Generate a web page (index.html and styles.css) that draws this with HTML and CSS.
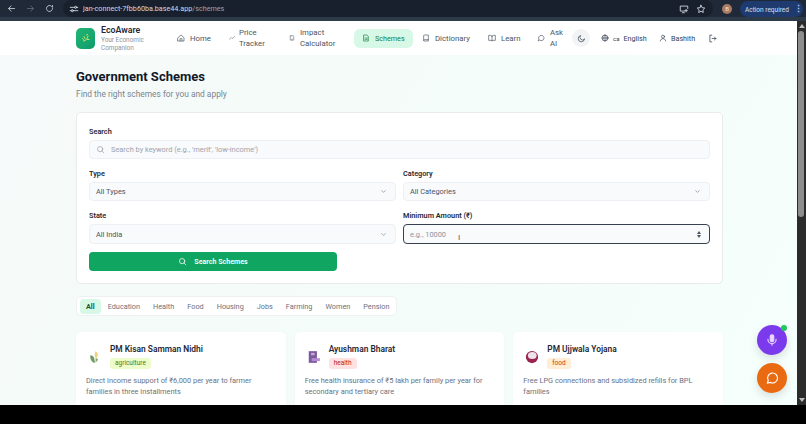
FILE: index.html
```html
<!DOCTYPE html>
<html lang="en">
<head>
    <meta charset="UTF-8">
    <title>Government Schemes - EcoAware</title>
    <link rel="stylesheet" href="styles.css">
</head>
<body>
    <div class="browser-bar">
        <div class="browser-nav">
            <svg class="b-icon" viewBox="0 0 24 24"><path d="M20 12H5M11 5l-7 7 7 7"/></svg>
            <svg class="b-icon dim" viewBox="0 0 24 24"><path d="M4 12h15M13 5l7 7-7 7"/></svg>
            <svg class="b-icon" viewBox="0 0 24 24"><path d="M20 12a8 8 0 1 1-2.500-5.800L20 9V4"/></svg>
        </div>
        <div class="address">
            <svg class="b-icon small" viewBox="0 0 24 24"><path d="M3 8h11M19 8h2M3 16h2M10 16h11"/><circle cx="16" cy="8" r="2.500"/><circle cx="8" cy="16" r="2.500"/></svg>
            <span class="url">jan-connect-7fbb60ba.base44.app<span class="url-path">/schemes</span></span>
            <span class="address-end">
                <svg class="b-icon small" viewBox="0 0 24 24"><path d="M21 11V5H3v12h10M8 21h5M17 13v6M14 16h6"/></svg>
                <svg class="b-icon small" viewBox="0 0 24 24"><path d="M12 3l2.800 5.800 6.200.9-4.500 4.400 1 6.300-5.500-3-5.500 3 1-6.300L3 9.700l6.200-.9z"/></svg>
            </span>
        </div>
        <span class="avatar">B</span>
        <span class="action">Action required <b>⋮</b></span>
    </div>

    <div class="window">
        <div class="page">
            <header class="topnav">
                <div class="brand">
                    <div class="logo">
                        <svg viewBox="0 0 24 24"><path d="M7 18c5-1 8-4 9-10M8 9l2 4M15 15l3 0M5 13l2 2M13 6l2-1"/></svg>
                    </div>
                    <div class="brand-text">
                        <strong>EcoAware</strong>
                        <small>Your Economic Companion</small>
                    </div>
                </div>
                <nav class="links">
                    <a class="link home"><svg viewBox="0 0 24 24"><path d="M3 11l9-8 9 8v10H3z"/><path d="M9 21v-7h6v7"/></svg>Home</a>
                    <a class="link price"><svg viewBox="0 0 24 24"><path d="M2 17l7-7 4 4 9-8"/></svg><span>Price<br>Tracker</span></a>
                    <a class="link impact"><svg viewBox="0 0 24 24"><rect x="5" y="3" width="14" height="18" rx="2"/><path d="M9 17h6"/></svg><span>Impact<br>Calculator</span></a>
                    <a class="link active"><svg viewBox="0 0 24 24"><path d="M6 3h9l4 4v14H6z"/><path d="M9 12h7M9 16h7"/></svg>Schemes</a>
                    <a class="link dict"><svg viewBox="0 0 24 24"><path d="M5 19V5a2 2 0 0 1 2-2h12v18H7a2 2 0 0 1-2-2 2 2 0 0 1 2-2h12"/></svg>Dictionary</a>
                    <a class="link learn"><svg viewBox="0 0 24 24"><path d="M12 7a4 4 0 0 0-4-3H2v15h7a3 3 0 0 1 3 2 3 3 0 0 1 3-2h7V4h-6a4 4 0 0 0-4 3zM12 7v14"/></svg>Learn</a>
                    <a class="link ask"><svg viewBox="0 0 24 24"><path d="M4 20l1.500-4.500A8 8 0 1 1 8.500 19z"/></svg><span>Ask<br>AI</span></a>
                </nav>
                <div class="tools">
                    <span class="theme"><svg viewBox="0 0 24 24"><path d="M20 14A8.500 8.500 0 1 1 10 4a7 7 0 0 0 10 10z"/></svg></span>
                    <span class="tool lang"><svg viewBox="0 0 24 24"><circle cx="12" cy="12" r="9"/><path d="M3 12h18M12 3c-5 5-5 13 0 18M12 3c5 5 5 13 0 18"/></svg><em>ca</em> English</span>
                    <span class="tool user"><svg viewBox="0 0 24 24"><circle cx="12" cy="8" r="4.500"/><path d="M4 21c1-5 4-7 8-7s7 2 8 7"/></svg>Bashith</span>
                    <svg class="logout" viewBox="0 0 24 24"><path d="M10 3H5v18h5M11 12h10M17 8l4 4-4 4"/></svg>
                </div>
            </header>

            <main class="content">
                <h1>Government Schemes</h1>
                <p class="subtitle">Find the right schemes for you and apply</p>

                <section class="filters">
                    <label class="field-label">Search</label>
                    <div class="input search-input">
                        <svg viewBox="0 0 24 24"><circle cx="11" cy="11" r="7"/><path d="M21 21l-5-5"/></svg>
                        <span>Search by keyword (e.g., 'merit', 'low-income')</span>
                    </div>
                    <div class="form-grid">
                        <div>
                            <label class="field-label">Type</label>
                            <div class="input select"><span>All Types</span><svg viewBox="0 0 24 24"><path d="M6 9l6 6 6-6"/></svg></div>
                        </div>
                        <div>
                            <label class="field-label">Category</label>
                            <div class="input select"><span>All Categories</span><svg viewBox="0 0 24 24"><path d="M6 9l6 6 6-6"/></svg></div>
                        </div>
                        <div>
                            <label class="field-label">State</label>
                            <div class="input select tall"><span>All India</span><svg viewBox="0 0 24 24"><path d="M6 9l6 6 6-6"/></svg></div>
                        </div>
                        <div>
                            <label class="field-label">Minimum Amount (₹)</label>
                            <div class="input focused"><span class="placeholder">e.g., 10000</span><span class="spinner"><i class="up"></i><i class="down"></i></span></div>
                        </div>
                    </div>
                    <button class="search-btn">
                        <svg viewBox="0 0 24 24"><circle cx="11" cy="11" r="7"/><path d="M21 21l-5-5"/></svg>
                        Search Schemes
                    </button>
                </section>

                <div class="tabs">
                    <span class="tab on">All</span>
                    <span class="tab">Education</span>
                    <span class="tab">Health</span>
                    <span class="tab">Food</span>
                    <span class="tab">Housing</span>
                    <span class="tab">Jobs</span>
                    <span class="tab">Farming</span>
                    <span class="tab">Women</span>
                    <span class="tab">Pension</span>
                </div>

                <div class="cards">
                    <article class="card">
                        <div class="card-head">
                            <svg class="emoji" viewBox="0 0 24 24"><path d="M13 2c4 2 5 7 2 11l-2 1c-2-4-2-9 0-12z" fill="#eed27a"/><path d="M4 9c4 0 7 3 7 7l1 6c-5 0-9-6-8-13z" fill="#6f9a62"/><path d="M13 14c3 0 4 1 4 3l-4 5z" fill="#8aa678"/></svg>
                            <div>
                                <h3>PM Kisan Samman Nidhi</h3>
                                <span class="tag agri">agriculture</span>
                            </div>
                        </div>
                        <p>Direct income support of ₹6,000 per year to farmer families in three installments</p>
                    </article>
                    <article class="card">
                        <div class="card-head">
                            <svg class="emoji" viewBox="0 0 24 24"><rect x="3" y="2" width="14" height="20" fill="#7d5a9e"/><rect x="7" y="5" width="6" height="4" fill="#c9a9dc"/><rect x="8" y="14" width="14" height="5" fill="#b48bd0"/></svg>
                            <div>
                                <h3>Ayushman Bharat</h3>
                                <span class="tag health">health</span>
                            </div>
                        </div>
                        <p>Free health insurance of ₹5 lakh per family per year for secondary and tertiary care</p>
                    </article>
                    <article class="card">
                        <div class="card-head">
                            <svg class="emoji" viewBox="0 0 24 24"><circle cx="12" cy="12" r="10.500" fill="#9b2350"/><ellipse cx="12.500" cy="9.500" rx="7.500" ry="6" fill="#eee3ea"/></svg>
                            <div>
                                <h3>PM Ujjwala Yojana</h3>
                                <span class="tag food">food</span>
                            </div>
                        </div>
                        <p>Free LPG connections and subsidized refills for BPL families</p>
                    </article>
                </div>
            </main>

            <button class="fab voice">
                <svg viewBox="0 0 24 24"><rect x="9" y="3" width="6" height="12" rx="3" fill="#e9d5ff"/><path d="M5 11a7 7 0 0 0 14 0M12 18v3"/></svg>
                <span class="online"></span>
            </button>
            <button class="fab chat">
                <svg viewBox="0 0 24 24"><path d="M4 21l1.500-5A8.500 8.500 0 1 1 9 19.500z"/></svg>
            </button>
            <span class="cursor">I</span>
        </div>
        <div class="scrollbar">
            <i class="arrow up"></i>
            <span class="thumb"></span>
            <i class="arrow down"></i>
        </div>
    </div>
    <div class="video-edge"></div>
</body>
</html>
```

FILE: styles.css
```css
* {
    margin: 0;
    padding: 0;
    box-sizing: border-box;
}

html, body {
    width: 806px;
    height: 424px;
    overflow: hidden;
}

body {
    font-family: Roboto, 'Noto Sans', sans-serif;
    display: flex;
    flex-direction: column;
    background: #000;
    color: #111827;
}

svg {
    fill: none;
    stroke: currentColor;
    stroke-width: 2;
    stroke-linecap: round;
    stroke-linejoin: round;
    flex-shrink: 0;
}

/* browser chrome */
.browser-bar {
    height: 21px;
    background: #1f2937;
    border-bottom: 4px solid #2d3a48;
    display: flex;
    align-items: center;
    color: #dfe3e8;
    flex-shrink: 0;
}

.browser-nav {
    width: 63px;
    display: flex;
    gap: 10px;
    padding-left: 7px;
}

.b-icon {
    width: 9px;
    height: 9px;
}

.b-icon.dim {
    color: #6b7280;
}

.b-icon.small {
    width: 10px;
    height: 10px;
}

.address {
    width: 650px;
    height: 17px;
    background: #18202e;
    border-radius: 9px;
    display: flex;
    align-items: center;
    padding: 0 7px 0 6px;
    gap: 4px;
}

.url {
    font-size: 7.200px;
    color: #d5d9df;
}

.url-path {
    color: #9ca3af;
}

.address-end {
    margin-left: auto;
    display: flex;
    gap: 7px;
}

.avatar {
    width: 10px;
    height: 10px;
    margin-left: 9px;
    border-radius: 50%;
    background: #a97a66;
    font-size: 6px;
    text-align: center;
    line-height: 10px;
    color: #f3e3da;
}

.action {
    margin-left: 8px;
    width: 63px;
    height: 16px;
    background: #1e3a6e;
    border-radius: 8px;
    font-size: 6.500px;
    line-height: 16px;
    color: #cfe0fb;
    padding-left: 5px;
    white-space: nowrap;
}

.action b {
    font-size: 9px;
    margin-left: 3px;
    color: #a8c7fa;
}

.window {
    flex: 0 0 384px;
    min-height: 0;
    display: flex;
    background: #fff;
}

.page {
    position: relative;
    flex: 1;
    overflow: hidden;
    background: linear-gradient(120deg, #f6fafa 0%, #f4fbf8 40%, #f5fffc 100%);
}

/* top nav */
.topnav {
    height: 34px;
    background: #fff;
    display: flex;
    align-items: center;
    padding-left: 76px;
    color: #4b5563;
}

.brand {
    width: 101px;
    display: flex;
    align-items: center;
    gap: 6px;
}

.logo {
    width: 19px;
    height: 21px;
    border-radius: 5px;
    background: linear-gradient(135deg, #22b573, #0f9d6c);
    display: flex;
    align-items: center;
    justify-content: center;
    color: #c5e86c;
}

.logo svg {
    width: 12px;
    height: 12px;
}

.brand-text {
    width: 48px;
}

.brand-text strong {
    display: block;
    font-size: 8.800px;
    font-weight: 600;
    color: #1f2937;
    line-height: 10px;
}

.brand-text small {
    display: block;
    margin-top: 1px;
    font-size: 6.400px;
    line-height: 8px;
    color: #8b94a1;
}

.links {
    display: flex;
    align-items: center;
    font-size: 7.800px;
    line-height: 11px;
}

.link {
    display: flex;
    align-items: center;
    gap: 5px;
}

.link svg {
    width: 8px;
    height: 8px;
}

.price svg,
.impact svg {
    width: 6px;
    height: 6px;
}

.price {
    gap: 4px;
}

.home { width: 52px; }
.price { width: 60px; }
.impact { width: 65px; }

.link.active {
    width: 59px;
    height: 19px;
    background: #d7f8e6;
    border-radius: 6px;
    color: #15803d;
    font-size: 7.200px;
    padding-left: 8px;
    margin-right: 9px;
}

.dict { width: 66px; }
.learn { width: 49px; }
.ask { width: 35px; }

.tools {
    display: flex;
    align-items: center;
}

.theme {
    width: 18px;
    height: 18px;
    border-radius: 50%;
    background: #f1f3f5;
    display: flex;
    align-items: center;
    justify-content: center;
    margin-right: 11px;
}

.theme svg {
    width: 9px;
    height: 9px;
}

.tool {
    display: flex;
    align-items: center;
    gap: 4px;
    font-size: 7.200px;
    color: #374151;
}

.tool svg {
    width: 8px;
    height: 8px;
}

.tool em {
    font-style: normal;
    font-size: 6px;
}

.lang {
    width: 58px;
}

.user {
    width: 49px;
}

.logout {
    width: 9px;
    height: 9px;
    color: #374151;
}

/* page body */
.content {
    padding: 14px 74px 0 76px;
}

h1 {
    font-size: 13px;
    font-weight: 700;
    line-height: 16px;
    color: #111827;
}

.subtitle {
    font-size: 8.400px;
    line-height: 11px;
    margin-top: 4px;
    color: #7b8591;
}

.filters {
    margin-top: 12px;
    height: 172px;
    background: #fff;
    border: 1px solid #e7ebee;
    border-radius: 5px;
    padding: 14px 12px 0;
}

.field-label {
    display: block;
    font-size: 7.300px;
    font-weight: 600;
    line-height: 9px;
    color: #1f2937;
    margin-bottom: 4px;
}

.input {
    height: 19px;
    background: #f8fafc;
    border: 1px solid #edf0f4;
    border-radius: 4px;
    display: flex;
    align-items: center;
    font-size: 7.400px;
    color: #4b5563;
    padding: 0 6px;
}

.input svg {
    width: 9px;
    height: 9px;
}

.search-input {
    gap: 6px;
    color: #9ca3af;
    margin-bottom: 10px;
}

.form-grid {
    display: grid;
    grid-template-columns: 1fr 1fr;
    column-gap: 7px;
    row-gap: 10px;
}

.select {
    justify-content: space-between;
}

.select svg {
    width: 7px;
    height: 7px;
    color: #6b7280;
    margin-right: 2px;
}

.tall {
    height: 20px;
}

.focused {
    height: 20px;
    border: 1px solid #374151;
    justify-content: space-between;
}

.placeholder {
    color: #8b94a1;
}

.spinner {
    display: flex;
    flex-direction: column;
    gap: 1px;
    margin-right: 2px;
}

.spinner i {
    width: 0;
    height: 0;
    border-left: 2.500px solid transparent;
    border-right: 2.500px solid transparent;
}

.spinner .up {
    border-bottom: 3px solid #4b5563;
}

.spinner .down {
    border-top: 3px solid #4b5563;
}

.search-btn {
    display: flex;
    align-items: center;
    justify-content: center;
    gap: 7px;
    width: 248px;
    height: 19px;
    margin-top: 8px;
    background: #10a560;
    border: none;
    border-radius: 4px;
    color: #fff;
    font-family: inherit;
    font-size: 7.100px;
    font-weight: 600;
}

.search-btn svg {
    width: 9px;
    height: 9px;
}

.tabs {
    display: flex;
    margin-top: 12px;
    height: 20px;
    align-items: center;
    background: #fff;
    border: 1px solid #eef1f3;
    border-radius: 5px;
    padding: 0 3px;
    gap: 1px;
    font-size: 7.300px;
    color: #6b7280;
    width: 321px;
}

.tab {
    padding: 0 6px;
    line-height: 15px;
}

.tab.on {
    background: #d7f8e6;
    color: #14532d;
    font-weight: 600;
    border-radius: 4px;
}

.cards {
    display: grid;
    grid-template-columns: repeat(3, 1fr);
    gap: 9px;
    margin-top: 16px;
}

.card {
    height: 90px;
    background: #fff;
    border-radius: 5px;
    padding: 12px 10px;
    box-shadow: 0 1px 3px rgba(0, 0, 0, 0.03);
}

.card-head {
    display: flex;
    align-items: center;
    gap: 8px;
}

.emoji {
    width: 14px;
    height: 14px;
    stroke: none;
    margin-left: 2px;
}

.card h3 {
    font-size: 8.400px;
    font-weight: 600;
    line-height: 11px;
    color: #1f2937;
}

.tag {
    display: block;
    width: max-content;
    font-size: 6.500px;
    line-height: 11px;
    padding: 0 5px;
    margin-top: 3px;
    border-radius: 3px;
}

.agri { background: #ecfccb; color: #4d7c0f; }
.health { background: #fee2e2; color: #b91c1c; }
.food { background: #ffedd5; color: #c2410c; }

.card p {
    margin-top: 7px;
    font-size: 7.400px;
    line-height: 10.500px;
    color: #6b7280;
}

/* floating buttons */
.fab {
    position: absolute;
    left: 757px;
    width: 30px;
    height: 30px;
    border: none;
    border-radius: 50%;
    display: flex;
    align-items: center;
    justify-content: center;
    color: #fff;
    box-shadow: 0 4px 8px rgba(0, 0, 0, 0.12);
}

.fab svg {
    width: 14px;
    height: 14px;
}

.voice {
    top: 304px;
    background: #7c3aed;
    color: #e9d5ff;
}

.chat {
    top: 342px;
    background: #ea6a12;
}

.online {
    position: absolute;
    top: 0;
    right: 0;
    width: 6px;
    height: 6px;
    border-radius: 50%;
    background: #22c55e;
}

.cursor {
    position: absolute;
    left: 458px;
    top: 212px;
    font-size: 8px;
    color: #4b5563;
}

/* scrollbar */
.scrollbar {
    width: 9px;
    background: #2b2b2b;
    position: relative;
    display: flex;
    flex-direction: column;
    align-items: center;
    justify-content: space-between;
    padding: 3px 0;
}

.thumb {
    position: absolute;
    top: 10px;
    left: 1px;
    width: 6px;
    height: 186px;
    background: #8d8d8d;
    border-radius: 3px;
}

.arrow {
    width: 0;
    height: 0;
    border-left: 3px solid transparent;
    border-right: 3px solid transparent;
}

.arrow.up {
    border-bottom: 4px solid #bdbdbd;
}

.arrow.down {
    border-top: 4px solid #bdbdbd;
}

.video-edge {
    flex: 1;
    background: #000;
}
```
